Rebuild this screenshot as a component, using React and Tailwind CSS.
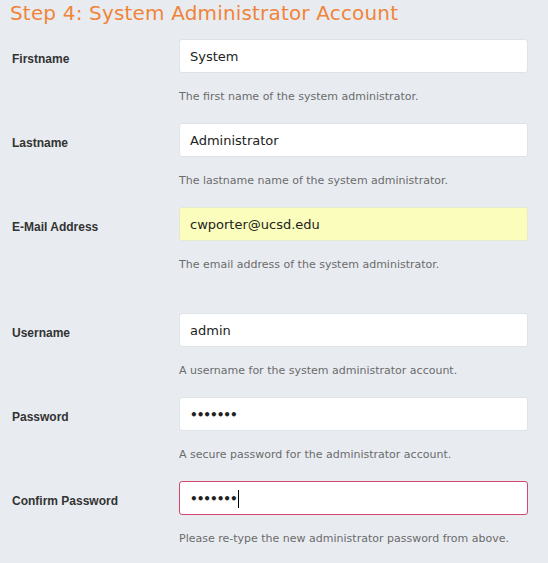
const fields = [
  { label: 'Firstname', value: 'System', help: 'The first name of the system administrator.' },
  { label: 'Lastname', value: 'Administrator', help: 'The lastname name of the system administrator.' },
  { label: 'E-Mail Address', value: 'cwporter@ucsd.edu', help: 'The email address of the system administrator.', autofill: true, spaced: true },
  { label: 'Username', value: 'admin', help: 'A username for the system administrator account.' },
  { label: 'Password', value: '•••••••', help: 'A secure password for the administrator account.', secret: true },
  { label: 'Confirm Password', value: '•••••••', help: 'Please re-type the new administrator password from above.', secret: true, focused: true },
]

function Field({ field }) {
  const box = field.focused
    ? 'border-[#d2486f] bg-white'
    : field.autofill
      ? 'border-[#e6e9d0] bg-[#fafdbb]'
      : 'border-[#dfe3e8] bg-white'

  return (
    <div className={`flex ${field.spaced ? 'pb-[40px]' : 'pb-[18px]'}`}>
      <div className="w-[179px] pl-3 pt-[5px] h-[34px] flex items-center text-[12px] font-bold text-[#333] font-['Liberation_Sans',Arial,sans-serif]">
        {field.label}
      </div>
      <div className="w-[349px]">
        <div className={`h-[34px] rounded-[3px] border px-[10px] pt-[1px] flex items-center text-[13px] text-[#222] ${box}`}>
          <span className={field.secret ? 'tracking-[-1px] text-[12px] font-bold' : ''}>{field.value}</span>
          {field.focused && <span className="ml-[1px] w-px h-[18px] bg-black" />}
        </div>
        <p className="mt-[15px] leading-[17px] text-[11px] text-[#6b6b6b]">{field.help}</p>
      </div>
    </div>
  )
}

export default function App() {
  return (
    <div className="w-[548px] h-[563px] overflow-hidden bg-[#e8ecf1] font-['DejaVu_Sans',Verdana,sans-serif]">
      <h1 className="pl-[10px] pt-[1px] h-[39px] text-[20px] leading-[24px] tracking-[0.17px] text-[#f0843a]">
        Step 4: System Administrator Account
      </h1>
      {fields.map(f => (
        <Field key={f.label} field={f} />
      ))}
    </div>
  )
}
